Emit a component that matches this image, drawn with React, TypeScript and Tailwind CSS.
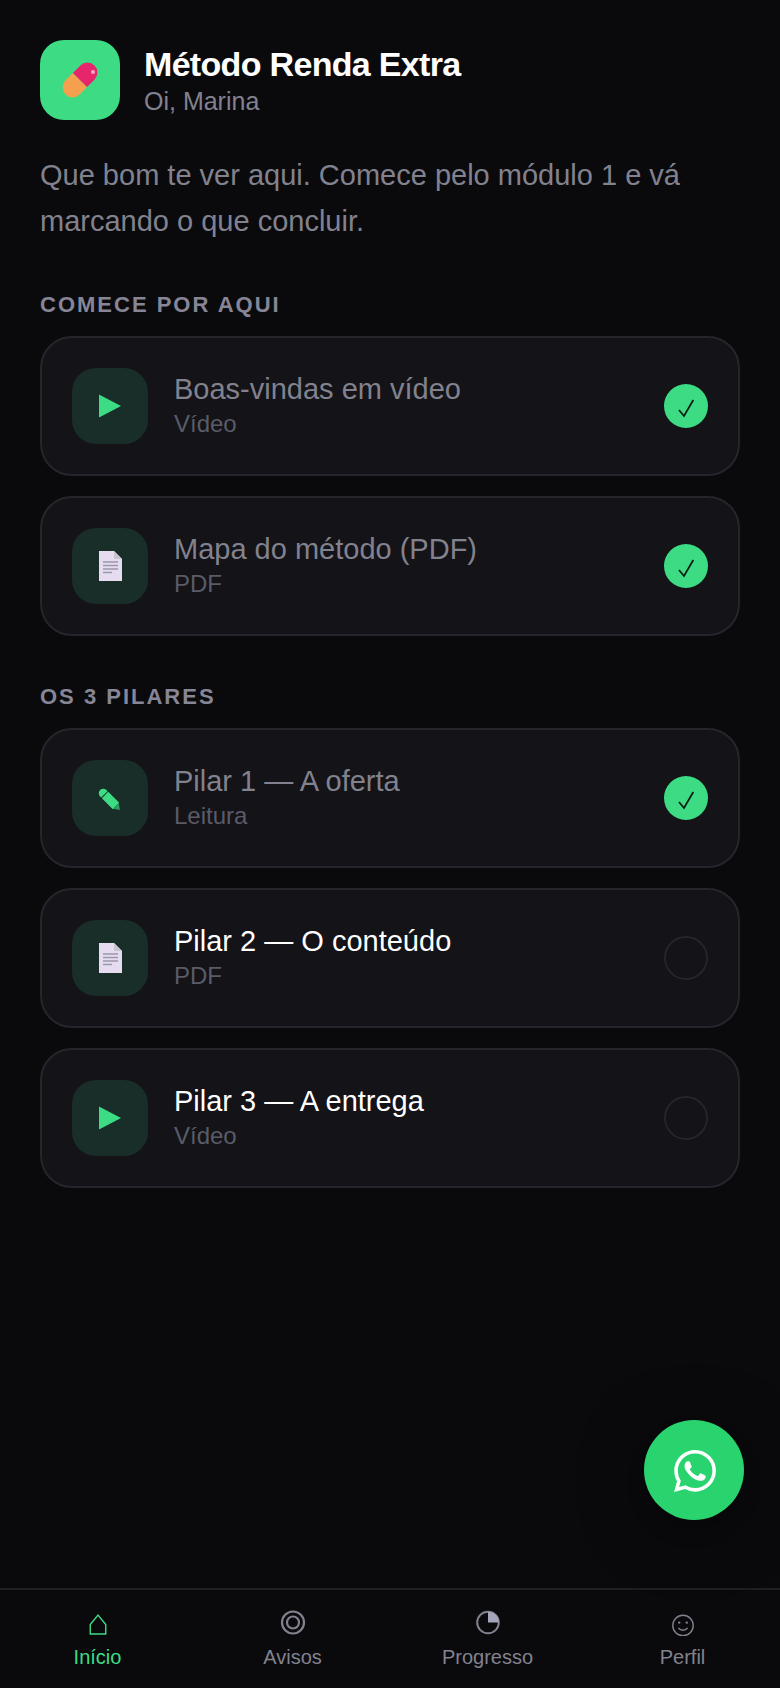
import { SiWhatsapp } from 'react-icons/si';

type Kind = 'video' | 'pdf' | 'read';

const startItems = [
  { title: 'Boas-vindas em vídeo', sub: 'Vídeo', kind: 'video' as Kind, done: true },
  { title: 'Mapa do método (PDF)', sub: 'PDF', kind: 'pdf' as Kind, done: true },
];

const pillarItems = [
  { title: 'Pilar 1 — A oferta', sub: 'Leitura', kind: 'read' as Kind, done: true },
  { title: 'Pilar 2 — O conteúdo', sub: 'PDF', kind: 'pdf' as Kind, done: false },
  { title: 'Pilar 3 — A entrega', sub: 'Vídeo', kind: 'video' as Kind, done: false },
];

function PillIcon() {
  return (
    <svg width="48" height="48" viewBox="0 0 48 48">
      <g transform="rotate(-45 24 24)">
        <path d="M24 14H13.5a10 10 0 0 0 0 20H24z" fill="#f4a04e" />
        <path d="M24 14h10.5a10 10 0 0 1 0 20H24z" fill="#e7256c" />
      </g>
      <circle cx="37" cy="16" r="2" fill="#f7a8c4" />
    </svg>
  );
}

function PlayIcon() {
  return (
    <svg width="22" height="24" viewBox="0 0 22 24">
      <polygon points="0,0.5 22,12 0,23.5" fill="#3ddc84" />
    </svg>
  );
}

function DocIcon() {
  return (
    <svg width="23" height="30" viewBox="0 0 23 30">
      <path d="M0 0h15l8 8v22H0z" fill="#e6dcf0" />
      <path d="M15 0l8 8h-8z" fill="#c9c3cf" />
      <path d="M4 11h15M4 14.5h15M4 18h15M4 21.5h9" stroke="#9d97a8" strokeWidth="1.3" />
    </svg>
  );
}

function PencilIcon() {
  return (
    <svg width="30" height="30" viewBox="0 0 30 30" className="translate-y-[2px]">
      <g transform="rotate(45 15 15)">
        <path d="M7 10.5H5.5a4.5 4.5 0 0 0 0 9H7z" fill="#3ddc84" />
        <rect x="8" y="10.5" width="15.5" height="9" fill="#3ddc84" />
        <polygon points="23.5,11 29,15 23.5,19" fill="#2c9c63" />
      </g>
    </svg>
  );
}

function ItemIcon({ kind }: { kind: Kind }) {
  if (kind === 'video') return <PlayIcon />;
  if (kind === 'pdf') return <DocIcon />;
  return <PencilIcon />;
}

function ItemCard({ title, sub, kind, done }: { title: string; sub: string; kind: Kind; done: boolean }) {
  return (
    <div className="flex h-[140px] items-center gap-[26px] rounded-[32px] border-2 border-[#25252b] bg-[#131318] px-[30px]">
      <div className="flex h-[76px] w-[76px] shrink-0 items-center justify-center rounded-[24px] bg-[#1a2e29]">
        <ItemIcon kind={kind} />
      </div>
      <div className="min-w-0 flex-1 pb-[2px]">
        <div className={`text-[29px] leading-[34px] ${done ? 'text-[#82828f]' : 'text-white'}`}>{title}</div>
        <div className="mt-[3px] text-[24px] leading-[30px] text-[#5b5b68]">{sub}</div>
      </div>
      {done ? (
        <div className="flex h-[44px] w-[44px] shrink-0 items-center justify-center rounded-full bg-[#3ddc84]">
          <svg width="44" height="44" viewBox="0 0 44 44" fill="none" stroke="#0b1f14" strokeWidth="1.8">
            <path d="M15 26l5 6 9.3-16" />
          </svg>
        </div>
      ) : (
        <div className="h-[44px] w-[44px] shrink-0 rounded-full border-2 border-[#25252b]" />
      )}
    </div>
  );
}

function NavIcon({ label }: { label: string }) {
  if (label === 'Início') {
    return (
      <svg width="26" height="26" viewBox="0 0 26 26" fill="none" stroke="#3ddc84" strokeWidth="1.4">
        <path d="M5.25 24V14.5L13 5l7.75 9.5V24z" />
      </svg>
    );
  }
  if (label === 'Avisos') {
    return (
      <svg width="26" height="26" viewBox="0 0 26 26" fill="none" stroke="#82828f" strokeWidth="2.2">
        <circle cx="13" cy="12.5" r="11" />
        <circle cx="13" cy="12.5" r="6" />
      </svg>
    );
  }
  if (label === 'Progresso') {
    return (
      <svg width="26" height="26" viewBox="0 0 26 26" fill="none" stroke="#82828f" strokeWidth="2">
        <circle cx="13" cy="12.5" r="10.8" />
        <path d="M13 12.5V1.7a10.8 10.8 0 0 1 10.8 10.8z" fill="#a5a5bb" stroke="none" />
      </svg>
    );
  }
  return (
    <svg width="26" height="26" viewBox="0 0 26 26" fill="none" stroke="#82828f" strokeWidth="1.4">
      <circle cx="13" cy="15.5" r="10.2" />
      <circle cx="9.2" cy="12.6" r="1.2" fill="#82828f" stroke="none" />
      <circle cx="16.8" cy="12.6" r="1.2" fill="#82828f" stroke="none" />
      <path d="M8.4 18c2.5 2.9 6.7 2.9 9.2 0" />
    </svg>
  );
}

const tabs = [
  { label: 'Início', active: true },
  { label: 'Avisos', active: false },
  { label: 'Progresso', active: false },
  { label: 'Perfil', active: false },
];

export default function App() {
  return (
    <div className="relative flex h-[1688px] w-[780px] flex-col overflow-hidden bg-[#0a0a0d] font-['Liberation_Sans',Arial,sans-serif]">
      <main className="flex-1 px-[40px] pt-[40px]">
        <header className="flex items-center gap-[24px]">
          <div className="flex h-[80px] w-[80px] items-center justify-center rounded-[24px] bg-[#3ddc84]">
            <PillIcon />
          </div>
          <div>
            <h1 className="text-[34px] font-bold leading-[42px] tracking-[-0.68px] text-white">Método Renda Extra</h1>
            <p className="text-[25px] leading-[32px] text-[#82828f]">Oi, Marina</p>
          </div>
        </header>

        <p className="mt-[32px] text-[29px] leading-[46px] text-[#82828f]">
          Que bom te ver aqui. Comece pelo módulo 1 e vá marcando o que concluir.
        </p>

        <h2 className="mt-[47px] text-[22px] font-bold leading-[28px] tracking-[2px] text-[#868696]">COMECE POR AQUI</h2>
        <div className="mt-[17px] flex flex-col gap-[20px]">
          {startItems.map((item) => (
            <ItemCard key={item.title} {...item} />
          ))}
        </div>

        <h2 className="mt-[47px] text-[22px] font-bold leading-[28px] tracking-[2px] text-[#868696]">OS 3 PILARES</h2>
        <div className="mt-[17px] flex flex-col gap-[20px]">
          {pillarItems.map((item) => (
            <ItemCard key={item.title} {...item} />
          ))}
        </div>
      </main>

      <nav className="grid h-[100px] grid-cols-4 border-t-2 border-[#1e1e23] bg-[#0a0a0d]">
        {tabs.map((tab) => (
          <div key={tab.label} className={`flex flex-col items-center pt-[20px] ${tab.active ? 'text-[#3ddc84]' : 'text-[#82828f]'}`}>
            <NavIcon label={tab.label} />
            <span className="mt-[8px] text-[20px] leading-[26px]">{tab.label}</span>
          </div>
        ))}
      </nav>

      <div className="absolute bottom-[168px] right-[36px] flex h-[100px] w-[100px] items-center justify-center rounded-full bg-[#29d46e] text-white shadow-[0_12px_60px_rgba(0,0,0,0.5)]">
        <SiWhatsapp size={42} className="translate-x-[1px] translate-y-[1px]" />
      </div>
    </div>
  );
}
